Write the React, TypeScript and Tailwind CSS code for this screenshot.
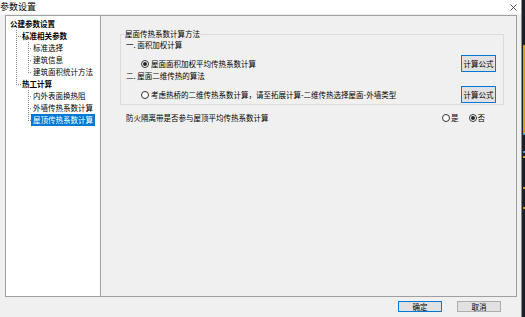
import React from "react";

const Radio = ({ checked }: { checked?: boolean }) => (
  <span className="w-[8px] h-[8px] rounded-full border border-[#333] bg-white flex items-center justify-center shrink-0">
    {checked && <span className="w-[4px] h-[4px] rounded-full bg-[#222]" />}
  </span>
);

const FormulaButton = () => (
  <button className="ml-auto mr-[7px] w-[35px] h-[17px] border border-[#0078d7] bg-[#e1e1e1] text-[7.5px] leading-[15px] text-black shrink-0">
    计算公式
  </button>
);

const treeRows = [
  { label: "公建参数设置", level: 0 },
  { label: "标准相关参数", level: 1 },
  { label: "标准选择", level: 2 },
  { label: "建筑信息", level: 2 },
  { label: "建筑面积统计方法", level: 2 },
  { label: "热工计算", level: 1 },
  { label: "内外表面换热阻", level: 2 },
  { label: "外墙传热系数计算", level: 2 },
  { label: "屋顶传热系数计算", level: 2, selected: true },
];

const TreeLines = () => (
  <svg className="absolute left-0 top-0" width="93" height="120" fill="none" stroke="#8a8a8a" strokeWidth="1" strokeDasharray="1 1">
    <path d="M10.5 14 V68 M10 20.5 H15 M10 68.5 H15" />
    <path d="M22.5 26 V56 M22 32.5 H26 M22 44.5 H26 M22 56.5 H26" />
    <path d="M22.5 74 V104 M22 80.5 H26 M22 92.5 H26 M22 104.5 H26" />
  </svg>
);

const App = () => {
  return (
    <div className="w-[525px] h-[317px] flex overflow-hidden bg-[#f0f0f0] font-['Noto_Sans_CJK_SC','Noto_Sans',sans-serif] text-black">
      <div className="w-[522px] flex flex-col border-r border-[#8c8c8c]">
        <div className="h-[14px] flex items-center justify-between bg-white">
          <span className="text-[9px] leading-[14px]">参数设置</span>
          <svg className="mr-[4px]" width="7" height="7" viewBox="0 0 7 7" stroke="#444" strokeWidth="0.9">
            <path d="M0.5 0.5 L6.5 6.5 M6.5 0.5 L0.5 6.5" />
          </svg>
        </div>
        <div className="mt-[1px] px-[5px]">
          <div className="flex h-[282px] w-[512px] border border-[#a0a0a0]">
            <div className="relative w-[95px] bg-white border-r border-[#a0a0a0] pt-[2px] text-[7.5px]">
              <TreeLines />
              {treeRows.map((r) => (
                <div
                  key={r.label}
                  className={
                    "h-[12px] leading-[12px] flex " +
                    (r.level === 0 ? "pl-[4px] font-bold" : r.level === 1 ? "pl-[16px] font-bold" : "pl-[25px]")
                  }
                >
                  <span className={r.selected ? "bg-[#0078d7] text-white px-[2px]" : r.level === 2 ? "px-[2px]" : ""}>
                    {r.label}
                  </span>
                </div>
              ))}
            </div>
            <div className="flex-1 flex flex-col text-[7.5px]">
              <fieldset className="mt-[13px] ml-[19px] w-[384px] border border-[#dcdcdc] pb-[1px]">
                <legend className="ml-[4px] leading-[10px]">屋面传热系数计算方法</legend>
                <div className="mt-[2px] ml-[5px] h-[8px] leading-[8px]">一. 面积加权计算</div>
                <div className="mt-[6px] h-[17px] flex items-center">
                  <span className="ml-[20px]">
                    <Radio checked />
                  </span>
                  <span className="ml-[2px] leading-[10px]">屋面面积加权平均传热系数计算</span>
                  <FormulaButton />
                </div>
                <div className="ml-[5px] h-[8px] leading-[8px]">二. 屋面二维传热的算法</div>
                <div className="mt-[6px] h-[17px] flex items-center">
                  <span className="ml-[20px]">
                    <Radio />
                  </span>
                  <span className="ml-[2px] leading-[10px]">
                    考虑热桥的二维传热系数计算，请至拓展计算-二维传热选择屋面-外墙类型
                  </span>
                  <FormulaButton />
                </div>
              </fieldset>
              <div className="mt-[8px] h-[10px] flex items-center">
                <span className="ml-[25px] leading-[10px]">防火隔离带是否参与屋顶平均传热系数计算</span>
                <div className="ml-auto mr-[31px] flex items-center">
                  <Radio />
                  <span className="ml-[1px]">是</span>
                  <span className="ml-[10px]">
                    <Radio checked />
                  </span>
                  <span className="ml-[1px]">否</span>
                </div>
              </div>
            </div>
          </div>
        </div>
        <div className="mt-[4px] flex justify-end gap-[15px] pr-[20px]">
          <button className="w-[44px] h-[11px] border border-[#0078d7] bg-[#e1e1e1] text-[7.5px] leading-[9px]">
            确定
          </button>
          <button className="w-[44px] h-[11px] border border-[#adadad] bg-[#e1e1e1] text-[7.5px] leading-[9px]">
            取消
          </button>
        </div>
      </div>
      <div className="w-[3px] bg-[#1b2127] flex flex-col">
        <div className="h-[45px]" />
        <div className="ml-[1px] w-[2px] h-[88px] bg-[#d4a017]" />
        <div className="ml-[1px] w-[2px] h-[2px] bg-[#4aa3df]" />
        <div className="h-[16px]" />
        <div className="ml-[1px] w-[2px] h-[2px] bg-[#4aa3df]" />
        <div className="h-[3px]" />
        <div className="ml-[1px] w-[2px] h-[2px] bg-[#d4a017]" />
        <div className="h-[29px]" />
        <div className="ml-[1px] w-[2px] h-[2px] bg-[#d4a017]" />
        <div className="h-[18px]" />
        <div className="ml-[1px] w-[2px] h-[2px] bg-[#d4a017]" />
      </div>
    </div>
  );
};

export default App;
